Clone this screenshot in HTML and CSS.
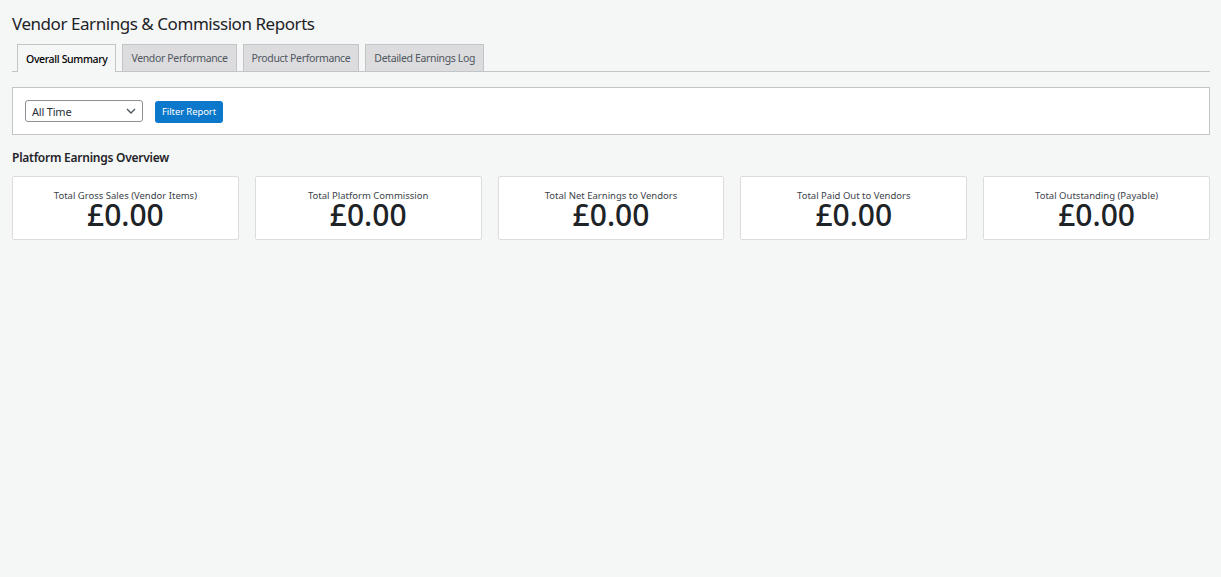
FILE: index.html
```html
<!DOCTYPE html>
<html>
<head>
<meta charset="utf-8">
<link rel="stylesheet" href="styles.css">
</head>
<body>
<div class="wrap">
  <h1 class="title">Vendor Earnings &amp; Commission Reports</h1>
  <nav class="tabs">
    <a class="tab active">Overall Summary</a>
    <a class="tab">Vendor Performance</a>
    <a class="tab">Product Performance</a>
    <a class="tab">Detailed Earnings Log</a>
  </nav>
  <div class="filter">
    <div class="select">All Time
      <svg class="chev" width="10" height="6" viewBox="0 0 10 6"><path d="M1 1l4 4 4-4" fill="none" stroke="#50575e" stroke-width="1.4"/></svg>
    </div>
    <button class="btn">Filter Report</button>
  </div>
  <h2 class="section">Platform Earnings Overview</h2>
  <div class="cards">
    <div class="card"><div class="label">Total Gross Sales (Vendor Items)</div><div class="value">£0.00</div></div>
    <div class="card"><div class="label">Total Platform Commission</div><div class="value">£0.00</div></div>
    <div class="card"><div class="label">Total Net Earnings to Vendors</div><div class="value">£0.00</div></div>
    <div class="card"><div class="label">Total Paid Out to Vendors</div><div class="value">£0.00</div></div>
    <div class="card"><div class="label">Total Outstanding (Payable)</div><div class="value">£0.00</div></div>
  </div>
</div>
</body>
</html>
```

FILE: styles.css
```css
html, body {
  margin: 0;
  padding: 0;
  background: #f5f6f6;
  font-family: "Noto Sans", "Open Sans", sans-serif;
  color: #1d2327;
}
.wrap {
  padding: 13px 11px 0 12px;
}
.title {
  margin: 0;
  font-size: 17px;
  letter-spacing: -0.45px;
  font-weight: 400;
  line-height: 22px;
  color: #1d2327;
}
.tabs {
  display: flex;
  gap: 6px;
  margin-top: 9px;
  padding-left: 5px;
  border-bottom: 1px solid #c3c4c7;
  height: 27px;
}
.tab {
  display: flex;
  align-items: center;
  box-sizing: border-box;
  height: 27px;
  padding: 0 8px;
  font-size: 10.5px;
  letter-spacing: -0.35px;
  color: #50575e;
  background: #dcdcde;
  border: 1px solid #c3c4c7;
  border-bottom: none;
}
.tab.active {
  background: #f5f6f6;
  color: #000;
  height: 28px;
  font-weight: 500;
}
.filter {
  margin-top: 15px;
  background: #fff;
  border: 1px solid #c3c4c7;
  height: 46px;
  display: flex;
  align-items: center;
  padding: 0 12px;
  gap: 12px;
}
.select {
  box-sizing: border-box;
  width: 118px;
  height: 22px;
  border: 1px solid #8c8f94;
  border-radius: 3px;
  font-size: 11px;
  letter-spacing: -0.2px;
  color: #2c3338;
  display: flex;
  align-items: center;
  justify-content: space-between;
  padding: 0 6px 0 6px;
}
.btn {
  box-sizing: border-box;
  height: 22px;
  width: 68px;
  border: none;
  border-radius: 3px;
  background: #0b78cc;
  color: #fff;
  font-family: inherit;
  font-size: 9.5px;
  letter-spacing: -0.1px;
  padding: 0;
  margin-top: 1px;
}
.section {
  margin: 15px 0 0;
  font-size: 12px;
  letter-spacing: -0.25px;
  font-weight: 600;
  line-height: 16px;
}
.cards {
  display: grid;
  grid-template-columns: repeat(5, 1fr);
  gap: 16px;
  margin-top: 10px;
}
.card {
  box-sizing: border-box;
  height: 64px;
  background: #fff;
  border: 1px solid #dcdcde;
  border-radius: 2px;
  text-align: center;
  padding-top: 13px;
}
.label {
  font-size: 9.5px;
  line-height: 12px;
  color: #3c434a;
}
.value {
  font-size: 30px;
  line-height: 25px;
  font-weight: 500;
  color: #1d2327;
}
```
